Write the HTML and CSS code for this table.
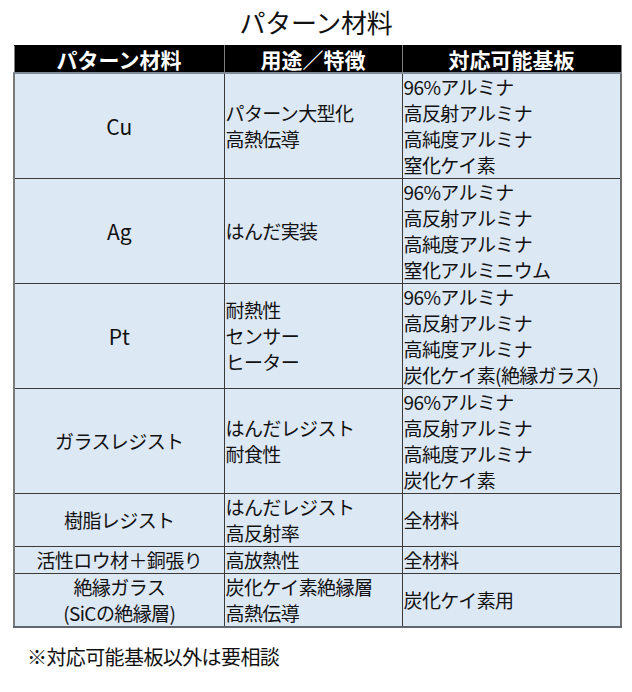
FILE: index.html
```html
<!DOCTYPE html>
<html lang="ja">
<head>
<meta charset="utf-8">
<link rel="stylesheet" href="styles.css">
</head>
<body>
<div class="page">
  <h1 class="title">パターン材料</h1>
  <table class="mat">
    <colgroup>
      <col class="c1"><col class="c2"><col class="c3">
    </colgroup>
    <thead>
      <tr class="head"><th>パターン材料</th><th>用途／特徴</th><th>対応可能基板</th></tr>
    </thead>
    <tbody>
      <tr><td class="name latin">Cu</td><td>パターン大型化<br>高熱伝導</td><td>96%アルミナ<br>高反射アルミナ<br>高純度アルミナ<br>窒化ケイ素</td></tr>
      <tr><td class="name latin">Ag</td><td>はんだ実装</td><td>96%アルミナ<br>高反射アルミナ<br>高純度アルミナ<br>窒化アルミニウム</td></tr>
      <tr><td class="name latin">Pt</td><td>耐熱性<br>センサー<br>ヒーター</td><td>96%アルミナ<br>高反射アルミナ<br>高純度アルミナ<br>炭化ケイ素(絶縁ガラス)</td></tr>
      <tr><td class="name">ガラスレジスト</td><td>はんだレジスト<br>耐食性</td><td>96%アルミナ<br>高反射アルミナ<br>高純度アルミナ<br>炭化ケイ素</td></tr>
      <tr><td class="name">樹脂レジスト</td><td>はんだレジスト<br>高反射率</td><td>全材料</td></tr>
      <tr><td class="name">活性ロウ材＋銅張り</td><td>高放熱性</td><td>全材料</td></tr>
      <tr><td class="name">絶縁ガラス<br>(SiCの絶縁層)</td><td>炭化ケイ素絶縁層<br>高熱伝導</td><td>炭化ケイ素用</td></tr>
    </tbody>
  </table>
  <p class="note">※対応可能基板以外は要相談</p>
</div>
</body>
</html>
```

FILE: styles.css
```css
html, body {
  margin: 0;
  padding: 0;
  background: #ffffff;
}
.page {
  width: 632px;
  height: 692px;
  padding-left: 13px;
  box-sizing: border-box;
  font-family: "Noto Sans CJK JP", "Noto Sans", sans-serif;
  color: #111111;
}
.title {
  margin: 0;
  width: 606px;
  height: 45px;
  line-height: 44px;
  text-align: center;
  font-size: 26px;
  font-weight: normal;
  letter-spacing: -0.3px;
}
.mat {
  width: 607px;
  border-collapse: collapse;
  table-layout: fixed;
  font-size: 19px;
  line-height: 26px;
  letter-spacing: -0.6px;
}
.c1 { width: 210px; }
.c2 { width: 178px; }
.c3 { width: 219px; }
.head th {
  background: #000000;
  color: #ffffff;
  font-weight: bold;
  font-size: 21px;
  letter-spacing: 0;
  height: 26px;
  padding: 0;
  line-height: 25px;
  border: 1px solid #000000;
  border-right-color: #7f7f7f;
  border-left-color: #7f7f7f;
  border-bottom: 2px solid #7f8a96;
}
.mat td {
  background: #dde8f5;
  border: 1px solid #3a3a3a;
  padding: 0 0 0 1px;
  vertical-align: middle;
  white-space: nowrap;
}
.mat tr td:first-child {
  border-left: 2px solid #7a7a7a;
}
.mat tr td:last-child {
  border-right: 2px solid #6f6f6f;
}
.mat tbody tr:last-child td {
  border-bottom: 2px solid #5f6670;
}
.mat td.name {
  text-align: center;
  padding: 0;
}
.mat td.latin {
  font-size: 21px;
  letter-spacing: 0;
}
.note {
  margin: 14px 0 0 14px;
  font-size: 20px;
  line-height: 30px;
  letter-spacing: -0.6px;
}
```
